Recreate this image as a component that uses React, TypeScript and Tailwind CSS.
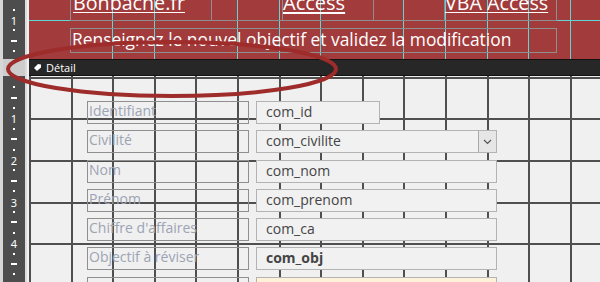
const STEP = 41.6;

const fields = [
  { label: "Identifiant", value: "com_id", short: true },
  { label: "Civilité", value: "com_civilite", combo: true },
  { label: "Nom", value: "com_nom" },
  { label: "Prénom", value: "com_prenom" },
  { label: "Chiffre d'affaires", value: "com_ca" },
  { label: "Objectif à réviser", value: "com_obj", bold: true },
  { label: "", value: "", peach: true },
];

function ticks(origin: number, height: number) {
  const out: { y: number; kind: "dot" | "dash" | "num"; n: number }[] = [];
  for (let q = 1; q < 40; q++) {
    const y = origin + (q * STEP) / 4;
    if (y > height + 6) break;
    if (y < -6) continue;
    out.push({ y, kind: q % 4 === 0 ? "num" : q % 2 === 0 ? "dash" : "dot", n: q / 4 });
  }
  return out;
}

function RulerPart({ origin, height }: { origin: number; height: number }) {
  return (
    <div className="relative overflow-hidden bg-[#4d4d4d]" style={{ height }}>
      {ticks(origin, height).map((t) =>
        t.kind === "num" ? (
          <span
            key={t.y}
            className="absolute left-0 w-full -translate-y-1/2 text-center text-[11px] leading-none text-white"
            style={{ top: t.y }}
          >
            {t.n}
          </span>
        ) : (
          <span
            key={t.y}
            className={`absolute h-[2px] -translate-y-1/2 bg-white ${t.kind === "dash" ? "left-[8px] w-[6px]" : "left-[10px] w-[2px]"}`}
            style={{ top: t.y }}
          />
        ),
      )}
    </div>
  );
}

function Ruler() {
  return (
    <div className="flex w-[29px] shrink-0">
      <div className="w-[3px] bg-[#d6d6d6]" />
      <div className="flex w-[22px] flex-col">
        <RulerPart origin={-21.6} height={59} />
        <div className="h-[17px] bg-[#cdcdcd]" />
        <RulerPart origin={0.7} height={206} />
      </div>
      <div className="w-[2px] bg-[#dcdcdc]" />
      <div className="w-[2px] bg-[#f0f0f0]" />
    </div>
  );
}

function Header() {
  const cyan = [2, 3, 5, 6, 7, 9, 10, 11, 12, 13];
  return (
    <div className="relative h-[59px] overflow-hidden bg-[#a23b3b] font-['Open_Sans',sans-serif] text-white">
      {cyan.map((k) => (
        <div key={k} className="absolute top-0 h-full w-px bg-[#63d4d4]" style={{ left: k * STEP }} />
      ))}
      <div className="absolute left-0 top-[20px] h-px w-full bg-[#63d4d4]" />
      {/* controls of the page header, on the design canvas */}
      <div className="absolute left-[41px] top-[-10px] flex h-[31px]">
        <div className="w-[142px] border border-[#8e8e8e] pl-[2px] pt-[2px] text-[19.7px] leading-[20px]">
          <span className="underline underline-offset-2">Bonbache.fr</span>
        </div>
        <div className="w-[71px] border border-l-0 border-[#8e8e8e]" />
        <div className="w-[91px] border border-l-0 border-[#8e8e8e] pt-[2px] text-[20px] leading-[20px]">
          <span className="underline underline-offset-2">Access</span>
        </div>
        <div className="w-[71px] border border-l-0 border-[#8e8e8e]" />
        <div className="w-[112px] border border-l-0 border-[#8e8e8e] pt-[2px] text-[19.7px] leading-[20px] whitespace-nowrap">
          <span className="underline underline-offset-2">VBA Access</span>
        </div>
      </div>
      <div className="absolute left-[41px] top-[28px] h-[25px] w-[487px] whitespace-nowrap border border-[#8e8e8e] pl-[1px] text-[17.4px] leading-[20px]">
        Renseignez le nouvel objectif et validez la modification
      </div>
    </div>
  );
}

function DetailBar() {
  return (
    <div className="flex h-[17px] items-center gap-[4px] border-y border-[#111] bg-[#272727] pl-[4px] font-['Open_Sans',sans-serif] text-[11px] text-white">
      <svg width="9" height="9" viewBox="0 0 9 9">
        <path d="M1 5 L5 1 L8 1.5 L8 4.5 L4 8 Z" fill="#fff" />
      </svg>
      <span className="leading-none">Détail</span>
    </div>
  );
}

function Field({ f }: { f: (typeof fields)[number] }) {
  return (
    <div className="flex h-[23px] gap-[7px]">
      <div className="w-[162px] border border-[#8f8f8f] pl-[1px] text-[14px] leading-[18px] text-[#9ca4b4]">
        {f.label}
      </div>
      <div
        className={`flex border border-[#b3b3b3] ${f.short ? "w-[124px]" : "w-[241px]"} ${f.peach ? "bg-[#fdf1d8]" : "bg-[#f1f1f1]"}`}
      >
        <span className={`flex-1 pl-[9px] text-[14px] leading-[19px] text-[#444] ${f.bold ? "font-bold" : ""}`}>
          {f.value}
        </span>
        {f.combo && (
          <span className="flex h-full w-[18px] items-center justify-center border-l border-[#a9a9a9] bg-[#e6e6e6]">
            <svg width="9" height="6" viewBox="0 0 9 6">
              <path d="M1 1 L4.5 4.5 L8 1" fill="none" stroke="#555" strokeWidth="1.2" />
            </svg>
          </span>
        )}
      </div>
    </div>
  );
}

function Detail() {
  return (
    <div className="relative flex-1 overflow-hidden bg-[#f0f0f0] font-['Open_Sans',sans-serif]">
      {/* design grid */}
      {Array.from({ length: 14 }, (_, k) => (
        <div key={`v${k}`} className="absolute top-0 h-full w-[2px] bg-[#4f4f4f]" style={{ left: k * STEP }} />
      ))}
      {Array.from({ length: 5 }, (_, k) => (
        <div key={`h${k}`} className="absolute left-0 h-[2px] w-full bg-[#4f4f4f]" style={{ top: 0.7 + k * STEP }} />
      ))}
      <div className="relative flex flex-col gap-[6.3px] pl-[58px] pt-[25px]">
        {fields.map((f, i) => (
          <Field key={i} f={f} />
        ))}
      </div>
    </div>
  );
}

export default function App() {
  return (
    <div className="relative flex h-[282px] w-[600px] overflow-hidden bg-[#f0f0f0]">
      <Ruler />
      <div className="flex min-w-0 flex-1 flex-col">
        <Header />
        <DetailBar />
        <Detail />
      </div>
      <svg className="pointer-events-none absolute inset-0" width="600" height="282" viewBox="0 0 600 282">
        <ellipse cx="172" cy="69" rx="164" ry="27" fill="none" stroke="#9d2c2b" strokeWidth="4" />
      </svg>
    </div>
  );
}
